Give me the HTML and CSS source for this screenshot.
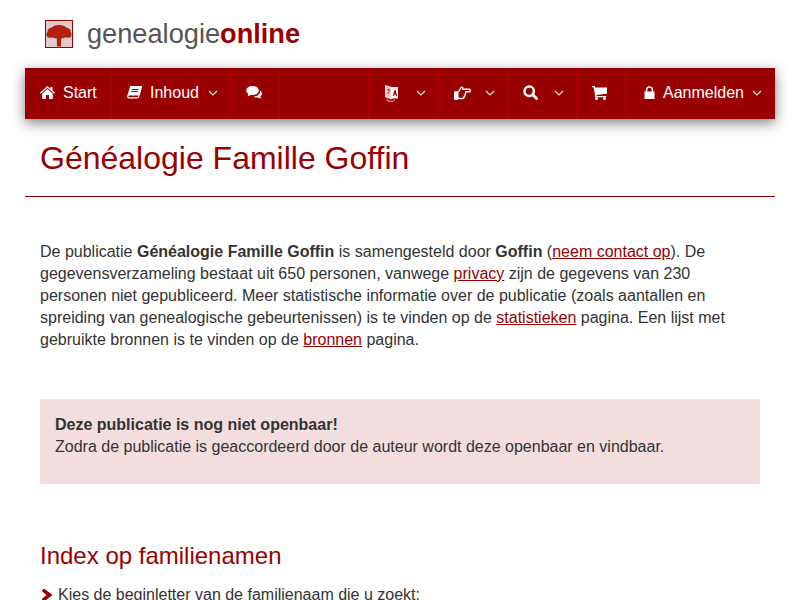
FILE: index.html
```html
<!DOCTYPE html>
<html lang="nl">
<head>
<meta charset="utf-8">
<title>Généalogie Famille Goffin</title>
<link rel="stylesheet" href="styles.css">
</head>
<body>
<div class="page">
  <header class="brand">
    <svg class="logo" width="28" height="28" viewBox="0 0 28 28"><defs><filter id="soft"><feGaussianBlur stdDeviation="0.5"/></filter></defs><rect x="0.5" y="0.5" width="27" height="27" fill="#e3caca" stroke="#990000"/><g fill="#b0200f" filter="url(#soft)"><ellipse cx="14" cy="8.500" rx="7.500" ry="3.500"/><ellipse cx="8" cy="11" rx="5.500" ry="3.500"/><ellipse cx="20" cy="11" rx="5.500" ry="3.500"/><ellipse cx="5" cy="14.500" rx="3.500" ry="3.200"/><ellipse cx="23" cy="14.500" rx="3.500" ry="3.200"/><ellipse cx="14" cy="14" rx="10" ry="4.500"/><path d="M11.700 17h4.600l-.3 9.500h-4z"/></g></svg>
    <span class="brand-name">genealogie<b>online</b></span>
  </header>
  <nav class="nav">
    <a class="item w-start">
      <svg class="ic" width="15" height="13" viewBox="0 0 15 13"><path d="M7.500 0 L10.500 2.700V1h2v3.500L15 6.800l-.8.900L7.500 1.800.8 7.700 0 6.800zM7.500 3l5.300 4.700V13H9V9H6v4H2.200V7.700z" fill="#fff"/></svg>
      <span>Start</span>
    </a>
    <a class="item w-inhoud">
      <svg class="ic" width="15" height="13" viewBox="0 0 15 13"><path d="M3.500 0H14.500c.5 0 .7.400.5 1L12.300 10.800c-.3 1-1 1.700-2 1.700H2C.7 12.500 0 11.500 .2 10.200c0-.5.200-1 .4-1.500L3 .8C3.100.3 3.200 0 3.500 0zM5 3l-.2 1h6.500l.2-1zM4.300 5l-.2 1h6.500l.2-1zM2.200 9.500c-.7 0-1 .5-.8 1 .1.500.5.800 1 .8h8c.3 0 .6-.2.700-.5l.5-1.300z" fill="#fff" fill-rule="evenodd"/></svg>
      <span>Inhoud</span>
      <svg class="chev" width="10" height="6" viewBox="0 0 10 6"><path d="M1 1l4 4 4-4" fill="none" stroke="#f3dede" stroke-width="1.200"/></svg>
    </a>
    <a class="item w-chat">
      <svg class="ic" width="16" height="13" viewBox="0 0 16 13"><ellipse cx="6.500" cy="4.500" rx="6.300" ry="4.500" fill="#fff"/><path d="M2.500 7.500 1.500 10.500 5.500 8.500z" fill="#fff"/><path d="M14 4.600c1.200.8 2 1.900 2 3.100 0 1.200-.7 2.200-1.800 3l1 2-3-1.300c-1.500.3-3.500.1-4.800-.9 3.500 0 7-1.800 6.600-5.900z" fill="#fff"/></svg>
    </a>
    <div class="spacer"></div>
    <a class="item w-icon w-lang">
      <svg class="ic" width="15" height="18" viewBox="0 0 15 18"><path d="M1.500 1.500 8 3.500V15l-6.500-2z" fill="#e8c8c8" stroke="#fff" stroke-width=".8"/><path d="M7.500 3h6.500v11.500H7.500z" fill="#fff"/><path d="M8.800 12l1.700-6h1l1.700 6h-1.100l-.4-1.400h-1.400l-.4 1.400z" fill="#900"/><path d="M3 6h3M4.500 5v1M3.500 10l2-3" stroke="#900" stroke-width=".8"/><path d="M3 15l1 2 5 .5 1.500-2" fill="none" stroke="#fff" stroke-width=".7"/></svg>
      <svg class="chev" width="10" height="6" viewBox="0 0 10 6"><path d="M1 1l4 4 4-4" fill="none" stroke="#f3dede" stroke-width="1.200"/></svg>
    </a>
    <a class="item w-icon">
      <svg class="ic" width="17" height="14" viewBox="0 0 17 14"><path d="M.7 6h3v7h-3zM3.700 6.500c1-.5 2-2.500 3-4.500.5-1 1.800-1 2 0l.2 1.300h6c1 0 1.500.5 1.500 1.200s-.6 1.200-1.500 1.200h-3.200c.2 1.500-.2 2.500-.8 3 .2 1-.2 1.700-.8 2 0 1.200-.8 1.800-2 1.800H6c-1 0-1.500-.4-2.300-.8z" fill="none" stroke="#fff" stroke-width="1.400" stroke-linejoin="round"/><path d="M.5 6h3v7.500h-3z" fill="#fff"/></svg>
      <svg class="chev" width="10" height="6" viewBox="0 0 10 6"><path d="M1 1l4 4 4-4" fill="none" stroke="#f3dede" stroke-width="1.200"/></svg>
    </a>
    <a class="item w-icon">
      <svg class="ic" width="15" height="15" viewBox="0 0 15 15"><circle cx="6.200" cy="6.200" r="4.700" fill="none" stroke="#fff" stroke-width="2.500"/><path d="M9.800 9.800 13.600 13.600" stroke="#fff" stroke-width="2.800" stroke-linecap="round"/></svg>
      <svg class="chev" width="10" height="6" viewBox="0 0 10 6"><path d="M1 1l4 4 4-4" fill="none" stroke="#f3dede" stroke-width="1.200"/></svg>
    </a>
    <a class="item w-cart">
      <svg class="ic" width="15" height="14" viewBox="0 0 15 14"><path d="M0 0h2.800l.4 1.500H15v6.200L4.400 9l.2 1h9.600v1.300H3.300L1.700 1.300H0z" fill="#fff"/><circle cx="4.500" cy="12.500" r="1.500" fill="#fff"/><circle cx="12.500" cy="12.500" r="1.500" fill="#fff"/></svg>
    </a>
    <a class="item w-login">
      <svg class="ic" width="11" height="13" viewBox="0 0 11 13"><path d="M.5 5.500h1.300V4a3.700 3.700 0 0 1 7.400 0v1.500h1.300v7.500H.5zM3.300 5.500h4.400V4a2.200 2.200 0 0 0-4.400 0z" fill="#fff" fill-rule="evenodd"/></svg>
      <span>Aanmelden</span>
      <svg class="chev" width="10" height="6" viewBox="0 0 10 6"><path d="M1 1l4 4 4-4" fill="none" stroke="#f3dede" stroke-width="1.200"/></svg>
    </a>
  </nav>
  <h1 class="title">Généalogie Famille Goffin</h1>
  <main class="content">
    <p class="intro">De publicatie <b>Généalogie Famille Goffin</b> is samengesteld door <b>Goffin</b> (<a href="#">neem contact op</a>). De gegevensverzameling bestaat uit 650 personen, vanwege <a href="#">privacy</a> zijn de gegevens van 230 personen niet gepubliceerd. Meer statistische informatie over de publicatie (zoals aantallen en spreiding van genealogische gebeurtenissen) is te vinden op de <a href="#">statistieken</a> pagina. Een lijst met gebruikte bronnen is te vinden op de <a href="#">bronnen</a> pagina.</p>
    <div class="notice"><b>Deze publicatie is nog niet openbaar!</b><br>Zodra de publicatie is geaccordeerd door de auteur wordt deze openbaar en vindbaar.</div>
    <h2 class="subtitle">Index op familienamen</h2>
    <p class="pick"><svg class="pick-ic" width="13" height="14" viewBox="0 0 13 14"><path d="M4 .5 12.500 7 4 13.500 1.700 11 6.500 7 1.700 3z" fill="#990000"/></svg>Kies de beginletter van de familienaam die u zoekt:</p>
  </main>
</div>
</body>
</html>
```
FILE: styles.css
```css
html, body { margin: 0; padding: 0; background: #fff; }
body { font: 16px/22px "Liberation Sans", Arial, sans-serif; color: #333; }
.page { width: 750px; margin: 0 auto; height: 600px; }
.brand { display: flex; align-items: center; height: 68px; padding-left: 20px; gap: 14px; }
.logo { display: block; flex: none; }
.brand-name { font-size: 27.2px; color: #555; line-height: 34px; }
.brand-name b { color: #990000; }
.nav { display: flex; height: 51px; background: #990000; box-shadow: 0 4px 12px rgba(0,0,0,.5); color: #fff; }
.item { display: flex; align-items: center; box-sizing: border-box; height: 51px; border-right: 1px solid #b20000; padding: 0 0 2px 15px; gap: 8px; }
.spacer { flex: 1; }
.ic, .chev { flex: none; display: block; }
.w-start { width: 87px; }
.w-inhoud { width: 119px; }
.w-inhoud .chev { margin-left: 1px; }
.w-chat { width: 49px; }
.w-icon { width: 69px; }
.w-icon .chev { margin-left: auto; margin-right: 12px; }
.w-lang { width: 71px; border-left: 1px solid #b20000; }
.w-cart { width: 49px; }
.w-login { width: 149px; border-right: 0; padding-left: 18px; }
.w-login .chev { margin-left: auto; margin-right: 13px; }
.title { margin: 0; padding: 21px 15px 19px; font-size: 32px; line-height: 37px; font-weight: 400; color: #990000; border-bottom: 1px solid #990000; }
.content { padding: 0 15px; }
.intro { margin: 0; padding-top: 44px; }
.content a { color: #990000; text-decoration: underline; }
.notice { margin-top: 48px; padding: 15px 15px 26px; background: #f2dede; }
.subtitle { margin: 56px 0 0; font-size: 24px; line-height: 32px; font-weight: 400; color: #990000; }
.pick { margin: 12px 0 0; display: flex; align-items: center; gap: 5px; }
.pick-ic { flex: none; }
```
